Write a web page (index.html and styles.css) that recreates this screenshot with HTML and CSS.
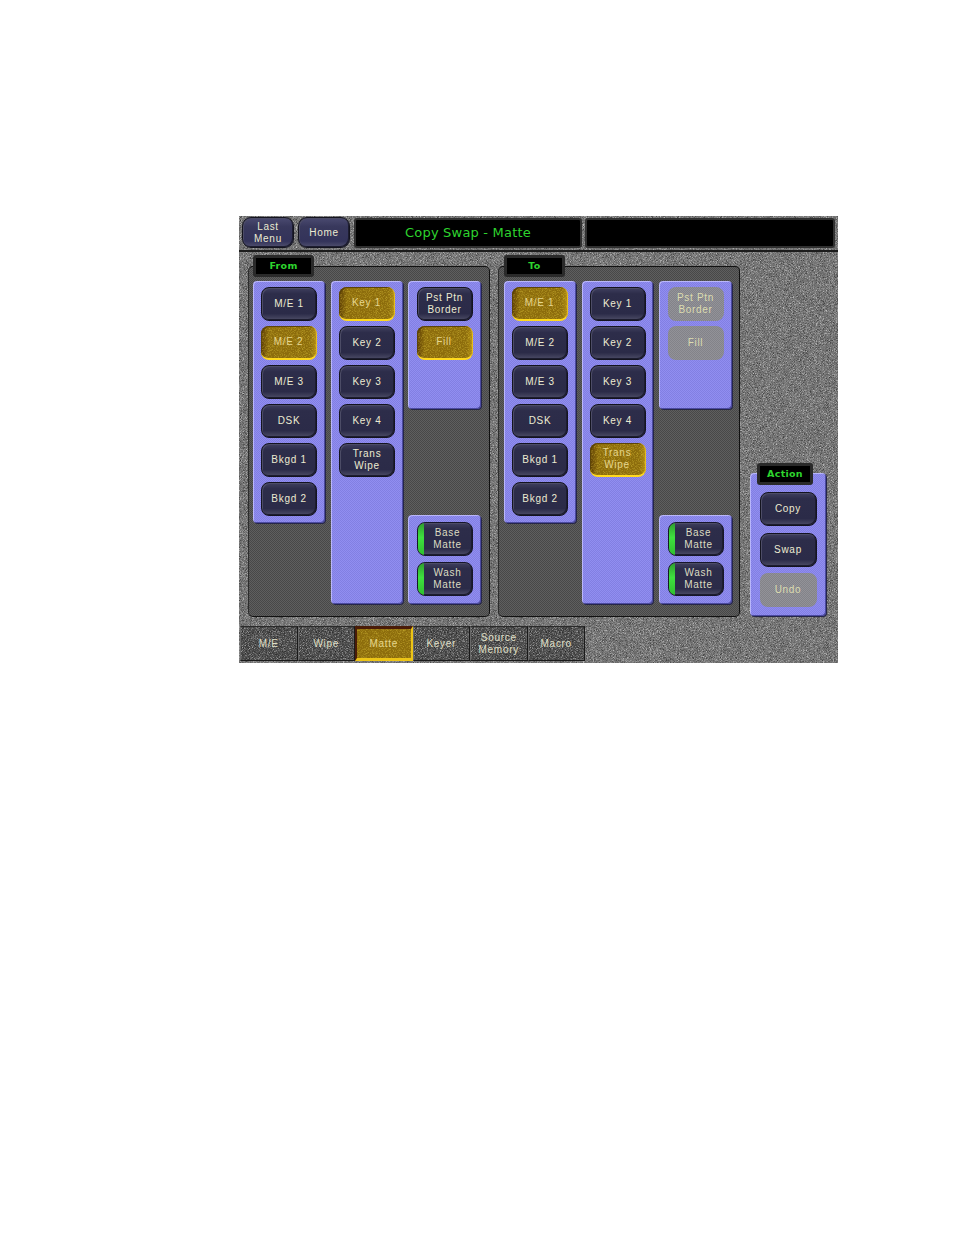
FILE: index.html
```html
<!DOCTYPE HTML>
<html>
<head>
    <meta charset="utf-8" />
    <title>Copy Swap - Matte</title>
    <link rel="stylesheet" href="styles.css">
</head>
<body>

<div class="screen">
    <div class="top-bar">
        <div class="btn top-btn">Last<br>Menu</div>
        <div class="btn top-btn">Home</div>
        <div class="title-box title-main">Copy Swap - Matte</div>
        <div class="title-box title-side"></div>
    </div>

    <div class="workspace">
        <div class="group">
            <div class="group-label">From</div>
            <div class="pad pad-source">
                <div class="btn">M/E 1</div>
                <div class="btn on">M/E 2</div>
                <div class="btn">M/E 3</div>
                <div class="btn">DSK</div>
                <div class="btn">Bkgd 1</div>
                <div class="btn">Bkgd 2</div>
            </div>
            <div class="pad pad-keys">
                <div class="btn on">Key 1</div>
                <div class="btn">Key 2</div>
                <div class="btn">Key 3</div>
                <div class="btn">Key 4</div>
                <div class="btn">Trans<br>Wipe</div>
            </div>
            <div class="pad-stack">
                <div class="pad pad-upper">
                    <div class="btn">Pst Ptn<br>Border</div>
                    <div class="btn on">Fill</div>
                </div>
                <div class="pad pad-lower">
                    <div class="btn lamp-btn"><span class="lamp"></span><span class="lamp-text">Base<br>Matte</span></div>
                    <div class="btn lamp-btn"><span class="lamp"></span><span class="lamp-text">Wash<br>Matte</span></div>
                </div>
            </div>
        </div>

        <div class="group group-to">
            <div class="group-label">To</div>
            <div class="pad pad-source">
                <div class="btn on">M/E 1</div>
                <div class="btn">M/E 2</div>
                <div class="btn">M/E 3</div>
                <div class="btn">DSK</div>
                <div class="btn">Bkgd 1</div>
                <div class="btn">Bkgd 2</div>
            </div>
            <div class="pad pad-keys">
                <div class="btn">Key 1</div>
                <div class="btn">Key 2</div>
                <div class="btn">Key 3</div>
                <div class="btn">Key 4</div>
                <div class="btn on">Trans<br>Wipe</div>
            </div>
            <div class="pad-stack">
                <div class="pad pad-upper">
                    <div class="btn off">Pst Ptn<br>Border</div>
                    <div class="btn off">Fill</div>
                </div>
                <div class="pad pad-lower">
                    <div class="btn lamp-btn"><span class="lamp"></span><span class="lamp-text">Base<br>Matte</span></div>
                    <div class="btn lamp-btn"><span class="lamp"></span><span class="lamp-text">Wash<br>Matte</span></div>
                </div>
            </div>
        </div>

        <div class="pad action">
            <div class="group-label action-label">Action</div>
            <div class="btn">Copy</div>
            <div class="btn">Swap</div>
            <div class="btn off">Undo</div>
        </div>
    </div>

    <div class="tabs">
        <div class="tab">M/E</div>
        <div class="tab">Wipe</div>
        <div class="tab tab-on">Matte</div>
        <div class="tab">Keyer</div>
        <div class="tab">Source<br>Memory</div>
        <div class="tab">Macro</div>
    </div>
</div>

</body>
</html>
```

FILE: styles.css
```css
:root {
    --speck-light: url("data:image/svg+xml,%3Csvg xmlns='http://www.w3.org/2000/svg' width='240' height='240'%3E%3Cfilter id='n'%3E%3CfeTurbulence type='fractalNoise' baseFrequency='1.3' numOctaves='1' seed='9'/%3E%3CfeColorMatrix values='0 0 0 0 1 0 0 0 0 1 0 0 0 0 1 1.6 0 0 0 -.76'/%3E%3C/filter%3E%3Crect width='240' height='240' filter='url(%23n)'/%3E%3C/svg%3E");
    --speck-dark: url("data:image/svg+xml,%3Csvg xmlns='http://www.w3.org/2000/svg' width='240' height='240'%3E%3Cfilter id='n'%3E%3CfeTurbulence type='fractalNoise' baseFrequency='1.3' numOctaves='1' seed='21'/%3E%3CfeColorMatrix values='0 0 0 0 0 0 0 0 0 0 0 0 0 0 0 1.6 0 0 0 -.76'/%3E%3C/filter%3E%3Crect width='240' height='240' filter='url(%23n)'/%3E%3C/svg%3E");
    --speck-gold: url("data:image/svg+xml,%3Csvg xmlns='http://www.w3.org/2000/svg' width='240' height='240'%3E%3Cfilter id='n'%3E%3CfeTurbulence type='fractalNoise' baseFrequency='1.3' numOctaves='1' seed='5'/%3E%3CfeColorMatrix values='0 0 0 0 .78 0 0 0 0 .6 0 0 0 0 .05 1.4 0 0 0 -.62'/%3E%3C/filter%3E%3Crect width='240' height='240' filter='url(%23n)'/%3E%3C/svg%3E");
    --dither: repeating-conic-gradient(rgba(255,255,255,0.06) 0 25%, rgba(0,0,0,0.06) 0 50%);
    --dither-dark: repeating-conic-gradient(rgba(255,255,255,0.09) 0 25%, rgba(0,0,0,0.09) 0 50%);
}
body {
    margin: 0;
    background: #fff;
    font-family: "Liberation Sans", sans-serif;
}
.screen {
    box-sizing: border-box;
    width: 599px;
    height: 447px;
    margin: 216px 0 0 239px;
    background-color: #747474;
    background-image: var(--speck-light), var(--speck-dark);
}
.top-bar {
    box-sizing: border-box;
    display: flex;
    height: 36px;
    padding: 1px 0 0 3px;
    border-bottom: 2px solid #1c1c1c;
}
.btn {
    box-sizing: border-box;
    display: flex;
    align-items: center;
    justify-content: center;
    flex: none;
    width: 56px;
    height: 34px;
    border: 1px solid #14141f;
    border-radius: 8px;
    background: linear-gradient(#3f3f5e, #2d2d4a 18%, #2b2b48 80%, #4c4c66);
    box-shadow: inset 1px 1px 0 #4c4c66, inset -1px -1px 0 #1d1d30;
    color: #ecebd2;
    font-size: 10px;
    line-height: 12px;
    text-align: center;
    letter-spacing: 0.7px;
}
.btn.on {
    border: 0;
    border-bottom: 2px solid #ffd91e;
    border-right: 1px solid #e6bd1c;
    background-color: #8c6c0c;
    background-image: var(--speck-gold), linear-gradient(90deg, rgba(60,30,0,0.6), rgba(0,0,0,0) 14%, rgba(0,0,0,0) 90%, rgba(255,210,30,0.3));
    box-shadow: inset 1px 1px 0 #5c4408;
    color: #e6d68e;
}
.btn.off {
    border: 0;
    background: var(--dither) 0 0 / 2px 2px, #8b8b92;
    box-shadow: none;
    color: #dcdcb0;
}
.top-btn {
    width: 52px;
    height: 31px;
    margin-right: 4px;
    border-radius: 9px;
    background: linear-gradient(#4a4a70, #38385c 30%, #33335a 80%, #50506e);
}
.title-box {
    box-sizing: border-box;
    height: 30px;
    margin-top: 1px;
    border: 2px solid #303030;
    border-radius: 3px;
    background: #000;
    color: #2ed42e;
    font-family: "DejaVu Sans", sans-serif;
    font-size: 13px;
    line-height: 25px;
    text-align: center;
    letter-spacing: 0.2px;
}
.title-main {
    width: 228px;
    margin-right: 3px;
}
.title-side {
    width: 250px;
}
.workspace {
    display: flex;
    align-items: flex-start;
    gap: 8px;
    padding: 14px 0 0 9px;
}
.group {
    box-sizing: border-box;
    position: relative;
    display: flex;
    align-items: flex-start;
    gap: 6px;
    width: 242px;
    height: 351px;
    padding: 14px 0 0 4px;
    border: 1px solid #111;
    border-left-color: #2c2c2c;
    border-radius: 5px;
    background: var(--dither-dark) 0 0 / 2px 2px, #4f4f4f;
}
.group-label {
    box-sizing: border-box;
    position: absolute;
    top: -12px;
    left: 4px;
    width: 61px;
    height: 22px;
    border: 3px solid #2a2a2a;
    border-radius: 3px;
    background: #000;
    color: #2ed42e;
    font-family: "DejaVu Sans", sans-serif;
    font-size: 9.5px;
    font-weight: bold;
    line-height: 15px;
    text-align: center;
    letter-spacing: 0.3px;
}
.pad {
    box-sizing: border-box;
    display: flex;
    flex-direction: column;
    align-items: center;
    gap: 5px;
    width: 72px;
    padding-top: 6px;
    border-radius: 4px;
    background: var(--dither) 0 0 / 2px 2px, #8a87f0;
    box-shadow: inset 1px 1px 0 #b9b6fa, inset -1px -1px 0 #4b4aa0, 1px 1px 0 #26264a;
}
.pad-source {
    height: 242px;
}
.pad-keys {
    height: 323px;
}
.pad-stack {
    display: flex;
    flex-direction: column;
    justify-content: space-between;
    width: 73px;
    height: 323px;
    margin-left: -1px;
}
.pad-upper {
    width: 73px;
    height: 128px;
}
.pad-lower {
    width: 73px;
    height: 89px;
    padding-top: 7px;
    gap: 6px;
}
.group-to {
    padding-left: 5px;
}
.group-to .group-label {
    left: 5px;
}
.group-to .pad-keys {
    width: 71px;
}
.group-to .pad-stack {
    margin-left: 0;
}
.lamp-btn {
    justify-content: flex-start;
    border: 1px solid #17172a;
    overflow: hidden;
}
.lamp {
    flex: none;
    width: 6px;
    height: 100%;
    background: linear-gradient(#2f9d2f, #3fe03f 45%, #2fc02f);
}
.lamp-text {
    flex: 1;
    color: #dcdcc2;
}
.action {
    position: relative;
    gap: 7px;
    width: 76px;
    height: 143px;
    margin: 207px 0 0 2px;
    padding-top: 19px;
}
.action .btn {
    width: 57px;
}
.action .btn.off {
    margin-top: -1px;
}
.action-label {
    top: -10px;
    left: 7px;
    width: 56px;
}
.tabs {
    display: flex;
    margin: 9px 0 0 1px;
}
.tab {
    box-sizing: border-box;
    display: flex;
    align-items: center;
    justify-content: center;
    width: 57.5px;
    height: 35px;
    border: 1px solid #1a1a1a;
    border-top-color: #2a2a2a;
    border-left-color: #6a6a6a;
    background-color: #4a4a4a;
    background-image: var(--speck-light), var(--speck-dark);
    color: #e0e0c8;
    font-size: 10px;
    line-height: 12px;
    text-align: center;
    letter-spacing: 0.7px;
}
.tab-on {
    border: 0;
    border-top: 3px solid #4a1c08;
    border-left: 2px solid #4a1c08;
    border-right: 2px solid #ecc416;
    border-bottom: 3px solid #ecc416;
    background-color: #8c6c0c;
    background-image: var(--speck-gold);
    color: #e6d68e;
}
```
